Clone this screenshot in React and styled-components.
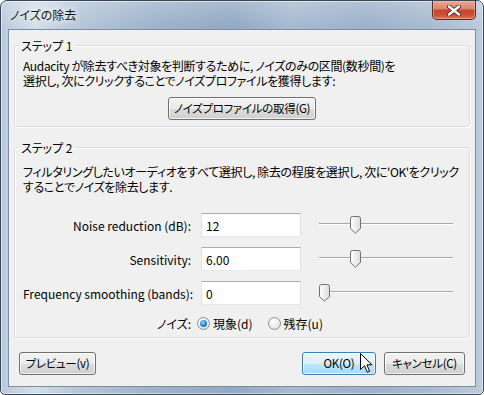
import styled, { createGlobalStyle } from "styled-components";

const GlobalStyle = createGlobalStyle`
  html, body { margin: 0; padding: 0; background: #ffffff; }
  body {
    font-family: "Noto Sans CJK JP", "Noto Sans", sans-serif;
    font-feature-settings: "palt";
    font-weight: 400;
    color: #000;
  }
`;

const rows = [
  { label: "Noise reduction (dB):", value: "12", min: 0, max: 48, at: 12 },
  { label: "Sensitivity:", value: "6.00", min: 0, max: 24, at: 6 },
  { label: "Frequency smoothing (bands):", value: "0", min: 0, max: 6, at: 0 },
];

const Thumb = () => (
  <svg width="11" height="18" viewBox="0 0 11 18">
    <defs>
      <linearGradient id="tg" x1="0" x2="1" y1="0" y2="0">
        <stop offset="0" stopColor="#ffffff" />
        <stop offset="1" stopColor="#dcdcdc" />
      </linearGradient>
    </defs>
    <path d="M2.5 0.5 H8.5 Q10.5 0.5 10.5 2.5 V12.5 L5.5 17.2 L0.5 12.5 V2.5 Q0.5 0.5 2.5 0.5 Z" fill="url(#tg)" stroke="#707070" />
  </svg>
);

const Cursor = () => (
  <svg width="13" height="21" viewBox="0 0 13 21">
    <path d="M0.5 0.5 V16.5 L4.5 12.7 L7.3 19.3 L9.6 18.3 L6.9 11.8 H12 Z" fill="#fff" stroke="#000" strokeLinejoin="miter" />
  </svg>
);

const CloseGlyph = () => (
  <svg width="14" height="11" viewBox="0 0 14 11">
    <path d="M2 1.5 L12 9.5 M12 1.5 L2 9.5" stroke="#5a2a24" strokeWidth="4.2" strokeLinecap="round" />
    <path d="M2 1.5 L12 9.5 M12 1.5 L2 9.5" stroke="#ffffff" strokeWidth="2.4" strokeLinecap="round" />
  </svg>
);

const App = () => (
  <>
    <GlobalStyle />
    <Window>
      <TitleBar>
        <Title>ノイズの除去</Title>
        <CloseButton>
          <CloseGlyph />
        </CloseButton>
      </TitleBar>

      <Client>
        <Group>
          <Legend>ステップ 1</Legend>
          <Desc>
            Audacity が除去すべき対象を判断するために, ノイズのみの区間(数秒間)を
            <br />
            選択し, 次にクリックすることでノイズプロファイルを獲得します:
          </Desc>
          <Center>
            <Button $w={148}>ノイズプロファイルの取得(G)</Button>
          </Center>
        </Group>

        <Group $top={13}>
          <Legend>ステップ 2</Legend>
          <Desc $step2>
            フィルタリングしたいオーディオをすべて選択し, 除去の程度を選択し, 次に'OK'をクリック
            <br />
            することでノイズを除去します.
          </Desc>
          <Form>
            {rows.map((row) => (
              <Row key={row.label}>
                <Label>{row.label}</Label>
                <Field defaultValue={row.value} />
                <Slider>
                  <ThumbSpot style={{ left: ((row.at - row.min) / (row.max - row.min)) * 123 }}>
                    <Thumb />
                  </ThumbSpot>
                </Slider>
              </Row>
            ))}
            <Row>
              <Label>ノイズ:</Label>
              <Radios>
                <Option>
                  <Radio $checked />
                  現象(d)
                </Option>
                <Option>
                  <Radio />
                  残存(u)
                </Option>
              </Radios>
            </Row>
          </Form>
        </Group>

        <Footer>
          <Button $w={77}>プレビュー(v)</Button>
          <ButtonGroup>
            <Button $w={74} $default>OK(O)</Button>
            <Button $w={81}>キャンセル(C)</Button>
          </ButtonGroup>
        </Footer>
      </Client>

      <CursorSpot>
        <Cursor />
      </CursorSpot>
    </Window>
  </>
);

export default App;

const Window = styled.div`
  position: relative;
  width: 484px;
  height: 395px;
  box-sizing: border-box;
  display: flex;
  flex-direction: column;
  border: 1px solid #3b4756;
  border-radius: 7px 7px 5px 5px;
  overflow: hidden;
  background:
    linear-gradient(180deg, rgba(255, 255, 255, 0.22) 0px, rgba(255, 255, 255, 0) 26px),
    linear-gradient(90deg, #b9cadc 0%, #d3dfeb 7%, #b5c6d8 16%, #9db3ca 32%, #92a9c3 48%, #a6bad0 60%, #9cb1c9 76%, #a9bcd1 90%, #bccbdc 100%);
  box-shadow: inset 0 0 0 1px rgba(255, 255, 255, 0.5);
`;

const TitleBar = styled.div`
  height: 28px;
  display: flex;
  justify-content: space-between;
  align-items: flex-start;
`;

const Title = styled.div`
  padding-left: 9px;
  font-size: 12px;
  line-height: 28px;
  color: #151515;
  text-shadow: 0 0 6px rgba(255, 255, 255, 0.9), 0 0 10px rgba(255, 255, 255, 0.7);
`;

const CloseButton = styled.div`
  box-sizing: border-box;
  width: 44px;
  height: 19px;
  margin-right: 7px;
  display: flex;
  align-items: center;
  justify-content: center;
  border: 1px solid #5f2a22;
  border-top: none;
  border-radius: 0 0 5px 5px;
  background: linear-gradient(180deg, #e8a797 0%, #dc8672 42%, #c8452e 52%, #cc4f36 78%, #e07a5e 100%);
  box-shadow: inset 0 0 0 1px rgba(255, 200, 190, 0.45);
`;

const Client = styled.div`
  flex: 1;
  margin: 0 7px 7px;
  border: 1px solid #7a8da3;
  background: #f0f0f0;
  padding: 8px 5px 0;
  display: flex;
  flex-direction: column;
`;

const Group = styled.fieldset`
  margin: ${(p) => p.$top || 0}px 0 0;
  padding: 3px 8px 6px;
  min-width: 0;
  border: 1px solid #d5dfe5;
  border-radius: 3px;
  box-shadow: inset 1px 1px 0 #ffffff, 1px 1px 0 #ffffff;
`;

const Legend = styled.legend`
  margin-left: -4px;
  padding: 0 2px;
  font-size: 12px;
  line-height: 15px;
`;

const Desc = styled.p`
  margin: ${(p) => (p.$step2 ? "6px" : "2px")} 0 0;
  font-size: 12px;
  line-height: 15px;
  letter-spacing: -0.35px;
  white-space: nowrap;
`;

const Center = styled.div`
  display: flex;
  justify-content: center;
  margin-top: 9px;
`;

const Form = styled.div`
  display: flex;
  flex-direction: column;
  gap: 10px;
  margin-top: 19px;
`;

const Row = styled.div`
  display: flex;
  align-items: center;
  min-height: 16px;
`;

const Label = styled.div`
  width: 168px;
  flex-shrink: 0;
  text-align: right;
  font-size: 12px;
  line-height: 15px;
  white-space: nowrap;
`;

const Field = styled.input`
  box-sizing: border-box;
  width: 100px;
  height: 24px;
  margin-left: 10px;
  padding: 0 4px;
  border: 1px solid;
  border-color: #abadb3 #dbdfe6 #e3e9ef #e2e3ea;
  background: #ffffff;
  font: 12px "Noto Sans CJK JP", sans-serif;
  color: #000;
  outline: none;
`;

const Slider = styled.div`
  position: relative;
  width: 134px;
  height: 18px;
  margin-left: 18px;
  &::before {
    content: "";
    position: absolute;
    left: 0;
    right: 0;
    top: 7px;
    height: 1px;
    background: #a8a8a8;
    box-shadow: 0 1px 0 #ffffff;
  }
`;

const ThumbSpot = styled.div`
  position: absolute;
  top: 0;
  height: 18px;
  line-height: 0;
`;

const Radios = styled.div`
  display: flex;
  gap: 15px;
  margin-left: 6px;
`;

const Option = styled.span`
  display: flex;
  align-items: center;
  gap: 3px;
  font-size: 12px;
  line-height: 15px;
  white-space: nowrap;
`;

const Radio = styled.span`
  box-sizing: border-box;
  width: 13px;
  height: 13px;
  border-radius: 50%;
  border: 1px solid #8e8f8f;
  background: radial-gradient(circle at 35% 30%, #ffffff 0%, #ececec 55%, #d4d4d4 100%);
  display: flex;
  align-items: center;
  justify-content: center;
  &::after {
    content: "";
    display: ${(p) => (p.$checked ? "block" : "none")};
    width: 7px;
    height: 7px;
    border-radius: 50%;
    background: radial-gradient(circle at 40% 35%, #8fd6fa 0%, #2a8ad4 50%, #0d4f8f 100%);
  }
`;

const Footer = styled.div`
  display: flex;
  justify-content: space-between;
  margin: 14px 5px 0;
`;

const ButtonGroup = styled.div`
  display: flex;
  gap: 8px;
`;

const Button = styled.button`
  box-sizing: border-box;
  width: ${(p) => p.$w}px;
  height: 23px;
  padding: 0;
  border: 1px solid ${(p) => (p.$default ? "#3c7fb1" : "#707070")};
  border-radius: 3px;
  background: ${(p) =>
    p.$default
      ? "linear-gradient(180deg, #eaf6fd 0%, #d9f0fc 50%, #bee6fd 50%, #a7d9f5 100%)"
      : "linear-gradient(180deg, #f2f2f2 0%, #ebebeb 50%, #dddddd 50%, #cfcfcf 100%)"};
  box-shadow: inset 0 0 0 1px rgba(255, 255, 255, 0.7);
  font: 11.5px/1 "Noto Sans CJK JP", sans-serif;
  font-feature-settings: "palt";
  letter-spacing: -0.3px;
  white-space: nowrap;
  color: #000;
`;

const CursorSpot = styled.div`
  position: absolute;
  left: 359px;
  top: 352px;
  line-height: 0;
`;
